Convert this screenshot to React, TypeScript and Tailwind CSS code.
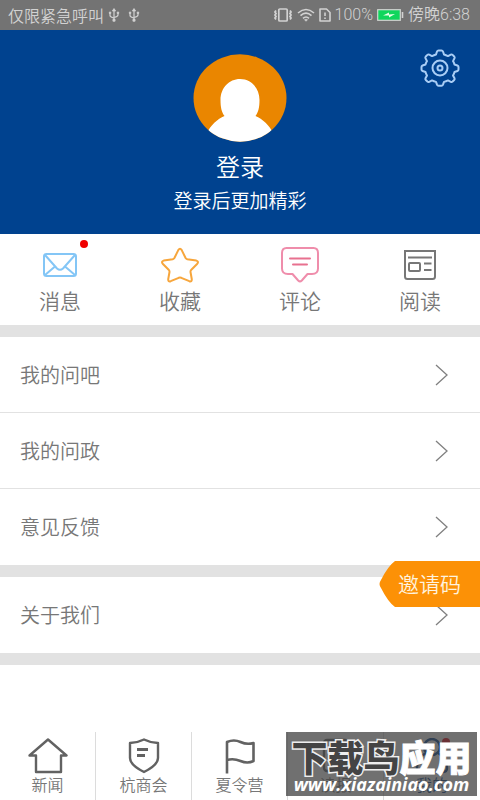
import React from 'react';

type IconProps = { className?: string };

const UsbIcon = () => (
  <svg aria-hidden="true" className="h-4 w-3" viewBox="0 0 12 16" fill="none" stroke="#d2d2d2" strokeWidth={1.2}>
    <path d="M6 2.500v11M2 6v2.500q0 1.500 4 2.500M10 6v2q0 1.500-4 2.500" />
    <path d="M4.300 4 6 1.500 7.700 4ZM1.300 5h1.500v1.500H1.300ZM9.200 5h1.500v1.500H9.200Z" fill="#d2d2d2" strokeWidth={0.7} />
    <circle cx="6" cy="13.200" r="1" fill="#d2d2d2" />
  </svg>
);

const VibrateIcon = () => (
  <svg aria-hidden="true" className="h-4 w-5" viewBox="0 0 20 16" fill="none" stroke="#d2d2d2" strokeWidth={1.7}>
    <rect x="5.800" y="2" width="8.400" height="12" rx="1" />
    <path d="m3 3.500-1 1.500 1 1.500-1 1.500 1 1.500-1 1.500 1 1.500M17 3.500l1 1.500-1 1.500 1 1.500-1 1.500 1 1.500-1 1.500" strokeWidth={1.800} />
  </svg>
);

const WifiIcon = () => (
  <svg aria-hidden="true" className="h-4 w-[18px]" viewBox="0 0 18 16" fill="none" stroke="#d2d2d2" strokeWidth={1.6}>
    <path d="M1 6Q9-1 17 6M3.500 8.700q5.500-5 11 0M6 11.300q3-2.600 6 0" />
    <path d="m7.500 12.700 1.500 1.600 1.500-1.600Q9 11.800 7.500 12.700Z" fill="#d2d2d2" strokeWidth={0.6} />
  </svg>
);

const SimAlertIcon = () => (
  <svg aria-hidden="true" className="h-4 w-3" viewBox="0 0 12 16" fill="none" stroke="#d2d2d2" strokeWidth={1.6}>
    <path d="M1 2h6.500L11 5.500V14H1Z" strokeLinejoin="round" />
    <path d="M6 5.500v3.500M6 10.500V12" />
  </svg>
);

const BatteryIcon = () => (
  <svg aria-hidden="true" className="h-4 w-[27px]" viewBox="0 0 27 16">
    <rect x="0.700" y="2.700" width="22.600" height="10.600" fill="#0fd65c" stroke="#d2d2d2" strokeWidth={1.2} />
    <path d="M25.500 5v6" stroke="#d2d2d2" strokeWidth={1.6} />
    <path d="m6 8.500 6-3v2l6-.500-6 3.500V8.500Z" fill="#e8ffe8" />
  </svg>
);

const GearIcon = () => (
  <svg aria-hidden="true" className="h-10 w-10" viewBox="0 0 40 40" fill="none" stroke="#a9cdf5" strokeWidth={2} strokeLinejoin="round">
    <path d="M16 6.500 17 3.500q.4-1 1.500-1h3q1.100 0 1.500 1l1 3q2 .6 4 1.600l2.800-1.500q1-.5 1.800.3l1.600 1.600q.8.800.3 1.800L33 13.100q1 1.700 1.500 3.400l2.900 1q1.100.4 1.100 1.500v2.500q0 1.100-1.100 1.500l-2.900 1q-.5 1.800-1.500 3.500l1.500 2.800q.5 1-.3 1.800l-1.600 1.500q-.8.700-1.800.2L28 32.400q-2 1-4 1.500l-1 2.800q-.4 1-1.500 1h-3q-1.100 0-1.500-1l-1-2.800q-2-.5-4-1.500l-2.800 1.400q-1 .5-1.800-.2l-1.600-1.500q-.8-.8-.3-1.800L7 27.500q-1-1.700-1.500-3.500l-2.900-1q-1.100-.4-1.100-1.500V19q0-1.100 1.100-1.500l2.900-1Q6 14.800 7 13.100l-1.500-2.800q-.5-1 .3-1.800l1.600-1.600q.8-.8 1.800-.3L12 8.100q2-1 4-1.600Z" />
    <circle cx="20" cy="20" r="7.500" />
    <circle cx="20" cy="20" r="2.500" />
  </svg>
);

const Avatar = () => (
  <svg aria-hidden="true" className="h-[88px] w-[94px]" viewBox="0 0 94 88">
    <defs>
      <clipPath id="avatar-clip">
        <ellipse cx="47" cy="44" rx="46.500" ry="43.700" />
      </clipPath>
    </defs>
    <g clipPath="url(#avatar-clip)">
      <rect width="94" height="88" fill="#ea8600" />
      <path d="M47 25c11 0 19.500 9 19.500 21 0 7-1 12-4 16 7 3 14 9 18 18v10h-67V80c4-9 11-15 18-18-3-4-4-9-4-16 0-12 8.500-21 19.500-21Z" fill="#fff" />
    </g>
  </svg>
);

const MailIcon = () => (
  <svg aria-hidden="true" className="h-10 w-10" viewBox="0 0 40 40" fill="none" stroke="#84c6f6" strokeWidth={2} strokeLinejoin="round">
    <rect x="4" y="9" width="32" height="22" rx="2.500" />
    <path d="m5 10 12 13.500q3 2.500 6 0L35 10M5 30l10-8.500M35 30l-10-8.500" />
  </svg>
);

const StarIcon = () => (
  <svg aria-hidden="true" className="h-10 w-10" viewBox="0 0 40 40" fill="none" stroke="#f7a63c" strokeWidth={2} strokeLinejoin="round">
    <path d="M18.400 4.900q1.600-2.400 3.200 0l4 8.100q.6.900 1.700 1.200l9 1.400q2.700.9 1 3.100l-6.200 6.300q-.7.900-.6 2l1.300 7.300q.1 2.700-2.500 1.900l-8-3.400q-1.300-.5-2.600 0l-8 3.400q-2.600.8-2.500-1.900l1.300-7.300q.1-1.100-.6-2l-6.200-6.300q-1.700-2.200 1-3.100l9-1.400q1.100-.3 1.700-1.200Z" />
  </svg>
);

const CommentIcon = () => (
  <svg aria-hidden="true" className="h-10 w-10" viewBox="0 0 40 40" fill="none" stroke="#ef8dab" strokeWidth={2} strokeLinejoin="round">
    <path d="M6.500 3h27q4.500 0 4.500 5v15.500q0 5.500-6 5.500h-4.500l-5.700 6.500q-1.800 1.800-3.600 0L12.500 29H8q-6 0-6-5.500V8q0-5 4.500-5Z" />
    <path d="M10 13.500h20M13 19.500h14" stroke="#e8718f" strokeLinecap="round" />
  </svg>
);

const NewsIcon = () => (
  <svg aria-hidden="true" className="h-10 w-10" viewBox="0 0 40 40" fill="none" stroke="#777" strokeWidth={2}>
    <path d="M5 6h30v25.500q0 2.500-2.500 2.500h-25Q5 34 5 31.500ZM8 12.500h24" />
    <rect x="9" y="18" width="11" height="8" rx="1" />
    <path d="M24 18.500h7.500M24 25h7.500" />
  </svg>
);

const ChevronIcon = () => (
  <svg aria-hidden="true" className="h-6 w-4" viewBox="0 0 16 24" fill="none" stroke="#808080" strokeWidth={1.3}>
    <path d="m2 2 11 10L2 22" />
  </svg>
);

const HomeIcon = ({ className }: IconProps) => (
  <svg aria-hidden="true" className={className} viewBox="0 0 40 36" fill="none" stroke="#626262" strokeWidth={2.4} strokeLinejoin="round">
    <path d="M20 1.500 38.500 17.500H33V34H8V17.500H1.500Z" strokeLinecap="round" />
  </svg>
);

const ShieldIcon = ({ className }: IconProps) => (
  <svg aria-hidden="true" className={className} viewBox="0 0 40 36" fill="none" stroke="#626262" strokeWidth={2.4} strokeLinejoin="round">
    <path d="M20 1.500Q27 5 34 5v15q0 7-14 14Q6 27 6 20V5q7 0 14-3.500Z" />
    <path d="M13 11.500h11M13 17.500h8" strokeWidth={2.800} />
  </svg>
);

const FlagIcon = ({ className }: IconProps) => (
  <svg aria-hidden="true" className={className} viewBox="0 0 40 36" fill="none" stroke="#626262" strokeWidth={2.600} strokeLinejoin="round">
    <path d="M7 35.500V4q7-3 13.500 0T33.500 5v18q-6 3-13 0T7 22" />
  </svg>
);

const PaperIcon = ({ className }: IconProps) => (
  <svg aria-hidden="true" className={className} viewBox="0 0 40 36" fill="none" stroke="#626262" strokeWidth={2.400}>
    <rect x="8" y="2" width="24" height="31" rx="3" />
    <path d="M14 12h12M14 19h12" />
  </svg>
);

const UserIcon = ({ className }: IconProps) => (
  <svg aria-hidden="true" className={className} viewBox="0 0 40 36" fill="none" stroke="#00428f" strokeWidth={2.400}>
    <circle cx="20" cy="9" r="8" />
    <path d="M14 15Q5 20 5 30q0 4 4 4h22q4 0 4-4 0-10-9-15" />
    <circle cx="34" cy="4" r="4" fill="#e60012" stroke="none" />
  </svg>
);

const shortcuts = [
  { label: '消息', icon: <MailIcon />, dot: true },
  { label: '收藏', icon: <StarIcon /> },
  { label: '评论', icon: <CommentIcon /> },
  { label: '阅读', icon: <NewsIcon /> },
];

const tabs = [
  { label: '新闻', Icon: HomeIcon },
  { label: '杭商会', Icon: ShieldIcon },
  { label: '夏令营', Icon: FlagIcon },
  { label: '读报', Icon: PaperIcon },
  { label: '我的', Icon: UserIcon, active: true },
];

const MenuRow: React.FC<{ label: string }> = ({ label }) => (
  <button type="button" className="flex h-19 w-full items-center justify-between pl-5 pr-[30px] text-left text-xl text-[#777]">
    {label}
    <ChevronIcon />
  </button>
);

const StatusBar = () => (
  <div className="flex h-[30px] items-center justify-between bg-[#737373] pl-2 pr-[10px] text-base text-[#d2d2d2]">
    <div className="flex items-center gap-2">
      <span className="-mr-1">仅限紧急呼叫</span>
      <UsbIcon />
      <UsbIcon />
    </div>
    <div className="flex items-center gap-1">
      <VibrateIcon />
      <WifiIcon />
      <SimAlertIcon />
      <span className="font-['Roboto']">100%</span>
      <BatteryIcon />
      <span className="font-['Roboto','Noto_Sans_CJK_SC',sans-serif]">傍晚6:38</span>
    </div>
  </div>
);

const Watermark = () => (
  <div className="absolute bottom-1 right-[3px] flex h-16 w-[191px] flex-col items-center bg-[#404040]/75 text-white">
    <div className="flex whitespace-nowrap text-4xl font-black leading-[48px]">
      <span className="text-[#444] [-webkit-text-stroke:3px_#eee] [paint-order:stroke_fill]">下载鸟</span>
      <span className="[-webkit-text-stroke:1px_white]">应用</span>
    </div>
    <span className="-mt-1 font-['Open_Sans',sans-serif] text-lg font-bold italic leading-4">www.xiazainiao.com</span>
  </div>
);

const App: React.FC = () => {
  return (
    <div className="flex min-h-screen w-full flex-col bg-white font-['Noto_Sans_CJK_SC',sans-serif] font-[350]">
      <StatusBar />

      <header className="relative flex h-[204px] flex-col items-center bg-[#00428f] pt-6 text-white">
        <button type="button" aria-label="设置" className="absolute right-5 top-[18px]">
          <GearIcon />
        </button>
        <Avatar />
        <button type="button" className="mt-2 text-2xl leading-8">登录</button>
        <p className="mt-1 text-[19px] leading-7">登录后更加精彩</p>
      </header>

      <nav className="grid h-[91px] grid-cols-4 pt-[11px]">
        {shortcuts.map((item) => (
          <button key={item.label} type="button" className="flex flex-col items-center text-[21px] leading-[30px] text-[#777]">
            <span className="relative">
              {item.icon}
              {item.dot && <span className="absolute -right-2 -top-[5px] h-2 w-2 rounded-full bg-[#f00000]" />}
            </span>
            {item.label}
          </button>
        ))}
      </nav>

      <main className="flex-1">
        <section className="divide-y divide-[#e2e2e2] border-t-[12px] border-[#e2e2e2]">
          <MenuRow label="我的问吧" />
          <MenuRow label="我的问政" />
          <MenuRow label="意见反馈" />
        </section>
        <section className="relative border-y-[12px] border-[#e2e2e2]">
          <MenuRow label="关于我们" />
          <button type="button" className="absolute -top-4 right-0 h-[46px] w-[101px] text-[21px] text-[#fff3df]">
            <svg aria-hidden="true" className="absolute inset-0 h-full w-full" viewBox="0 0 101 46">
              <path d="M16 0h85v46H16Q9 41 2 27q-3-4 0-8Q9 5 16 0Z" fill="#fc9106" />
            </svg>
            <span className="relative">邀请码</span>
          </button>
        </section>
      </main>

      <footer className="relative">
        <nav className="grid h-[68px] grid-cols-5 divide-x divide-[#dcdcdc]">
          {tabs.map(({ label, Icon, active }) => (
            <button
              key={label}
              type="button"
              className={`flex flex-col items-center pt-1.5 text-base leading-5 ${active ? 'text-[#00428f]' : 'text-[#777]'}`}
            >
              <Icon className="h-9 w-10" />
              {label}
            </button>
          ))}
        </nav>
        <Watermark />
      </footer>
    </div>
  );
};

export default App;
